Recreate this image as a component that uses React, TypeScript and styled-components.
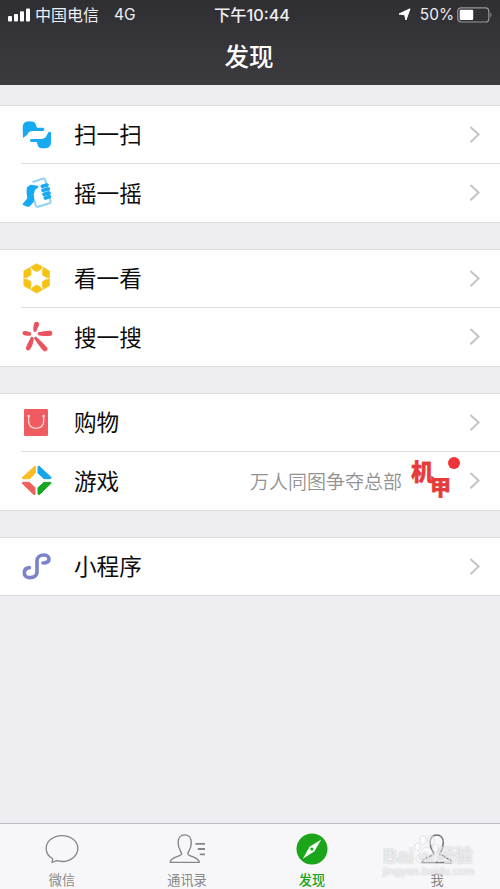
import React from 'react';
import styled, { createGlobalStyle } from 'styled-components';

const GlobalStyle = createGlobalStyle`
  * { box-sizing: border-box; }
  body {
    margin: 0;
    background: #eeedf2;
    font-family: Inter, "Noto Sans CJK SC", sans-serif;
  }
  svg { display: block; flex: none; }
`;

const Screen = styled.div`
  width: 500px;
  height: 889px;
  display: flex;
  flex-direction: column;
  background: #eeedf2;
  overflow: hidden;
`;

const Header = styled.header`
  height: 85px;
  flex: none;
  color: #fff;
  background: linear-gradient(#2f2e32, #3c3b40);
`;

const StatusBar = styled.div`
  height: 28px;
  display: grid;
  grid-template-columns: 1fr auto 1fr;
  align-items: center;
  padding: 0 7px 0 8px;
  font-size: 16px;
  line-height: 28px;
  white-space: nowrap;
  color: #efeff1;
`;

const StatusSide = styled.div<{ $end?: boolean }>`
  display: flex;
  align-items: center;
  justify-content: ${p => (p.$end ? 'flex-end' : 'flex-start')};
`;

const Carrier = styled.span`
  margin-left: 4px;
`;

const Network = styled.span`
  margin-left: 15px;
  padding-top: 1px;
  font-size: 15.5px;
`;

const Clock = styled.span`
  font-weight: 500;
  font-size: 16.3px;
  margin-left: 3px;
`;

const Percent = styled.span`
  margin: 0 3px 0 9px;
  padding-top: 1px;
  font-size: 15.4px;
`;

const Title = styled.h1`
  margin: 0;
  height: 56px;
  text-align: center;
  font-size: 24.5px;
  font-weight: 500;
  line-height: 58px;
  padding-right: 2px;
`;

const Main = styled.main`
  flex: 1;
  display: flex;
  flex-direction: column;
  gap: 26px;
  padding-top: 20px;
`;

const Group = styled.section`
  background: #fff;
  border-top: 1px solid #dcdbe0;
  border-bottom: 1px solid #dcdbe0;
`;

const Row = styled.div`
  display: flex;
  align-items: center;
  height: 57px;
  padding: 0 19px 0 21px;

  & + & {
    height: 59px;
    padding-left: 0;
    margin-left: 21px;
    border-top: 1px solid #dddcdf;
  }
`;

const Label = styled.span`
  margin-left: 21px;
  padding-top: 1px;
  font-size: 22.6px;
  line-height: 32px;
  color: #0c0c0c;
  flex: 1;
`;

const Note = styled.span`
  padding-top: 3px;
  font-size: 19px;
  font-weight: 350;
  line-height: 28px;
  color: #929292;
`;

const Promo = styled.div`
  position: relative;
  width: 42px;
  height: 44px;
  margin: 0 16px 0 9px;
`;

const PromoChar = styled.span<{ $x: number; $y: number; $size: number }>`
  position: absolute;
  left: ${p => p.$x}px;
  top: ${p => p.$y}px;
  font-size: ${p => p.$size}px;
  line-height: 22px;
  font-weight: 900;
  color: #e63b3b;
  -webkit-text-stroke: 0.4px #e63b3b;
`;

const Dot = styled.i`
  position: absolute;
  right: -7px;
  top: -2px;
  width: 12px;
  height: 12px;
  border-radius: 50%;
  background: #f03538;
`;

const TabBar = styled.nav`
  height: 66px;
  flex: none;
  display: grid;
  grid-template-columns: repeat(4, 125px);
  border-top: 1px solid #bdbcc2;
  background: #f7f7fa;
  position: relative;
`;

const Tab = styled.div<{ $active?: boolean }>`
  display: flex;
  flex-direction: column;
  align-items: center;
  padding-top: 8px;
  padding-right: 1px;
  font-size: 13.2px;
  line-height: 20px;
  font-weight: ${p => (p.$active ? 500 : 400)};
  color: ${p => (p.$active ? '#1aa51a' : '#878787')};

  span { margin-top: 4px; }
`;

const Watermark = styled.div`
  position: absolute;
  left: 383px;
  top: 19px;
  width: 94px;
  font-family: "Liberation Sans", "Noto Sans CJK SC", sans-serif;
  color: rgba(255, 255, 255, 0.7);
  text-shadow: 0 0 1.5px rgba(110, 110, 120, 0.5);
  white-space: nowrap;
`;

const WatermarkBrand = styled.div`
  display: flex;
  align-items: center;
  height: 26px;
  font-size: 20px;
  font-weight: 700;
  line-height: 26px;

  b { font-size: 18px; font-weight: 700; }
`;

const PawBadge = styled.div`
  display: grid;
  justify-items: center;
  margin: -13px -2px 0 0;

  svg, span { grid-area: 1 / 1; }
  span {
    align-self: end;
    font-size: 13px;
    line-height: 17px;
  }
`;

const WatermarkUrl = styled.div`
  font-size: 11px;
  line-height: 10px;
  height: 10px;
  letter-spacing: 0.15px;
  margin-top: -3px;
`;

const Signal = () => (
  <svg width="23" height="14" viewBox="0 0 23 14" fill="#fff">
    <rect x="0" y="8" width="4" height="5.5" rx="1" />
    <rect x="6" y="6" width="4" height="7.5" rx="1" />
    <rect x="12" y="3.3" width="4" height="10.2" rx="1" />
    <rect x="18" y="0.5" width="4" height="13" rx="1" />
  </svg>
);

const Location = () => (
  <svg width="13" height="13" viewBox="0 0 13 13" fill="#fff" stroke="#fff" strokeLinejoin="round">
    <path d="M12 .8 8 12 6.6 6.8 1 6Z" />
  </svg>
);

const Battery = () => (
  <svg width="36" height="16" viewBox="0 0 36 16">
    <rect x="0.8" y="0.8" width="31" height="14.2" rx="3.3" fill="none" stroke="#98979b" strokeWidth="1.2" />
    <rect x="2.7" y="2.8" width="13.5" height="10.2" rx="1" fill="#fff" />
    <path d="M33.4 5.4q2.2 2.5 0 5Z" fill="#98979b" />
  </svg>
);

const Chevron = () => (
  <svg width="12" height="18" viewBox="0 0 12 18" fill="none" stroke="#c5c5c8" strokeWidth="2">
    <path d="M1.4 1 9.6 8.6 1.4 16.2" />
  </svg>
);

const ScanIcon = () => (
  <svg width="32" height="32" viewBox="33 39 96 96" fill="#18aaf0">
    <path d="M39 96 38 64Q38 46 57 46L70 47Q76 48 78 57L81 65H99Q103 66 103 70T99 75H68Q62 75 56 79L52 86Z" />
    <path d="M120 77Q123 77 123 81V108Q123 127 104 127H95Q86 127 83 117L80 108H64Q60 108 60 104T64 99H94Q102 99 107 94L115 79Z" />
  </svg>
);

const ShakeIcon = () => (
  <svg width="32" height="32" viewBox="33 213 96 96">
    <path d="M68 228 99 218Q104 217 106 223L122 286Q123 290 118 292L84 302Q78 303 77 298L72 280" fill="#fff" stroke="#8fd2f5" strokeWidth="6" />
    <path d="M51 244 61 236Q75 236 86 241 84 249 75 251L71 267Q75 277 71 288L58 302Q46 304 37 295L52 277Q48 255 51 244Z" fill="#18aaf0" />
    <path d="M97 241 111 237M99 253 115 249M102 265 117 261M106 276 118 272" stroke="#18aaf0" strokeWidth="11" strokeLinecap="round" />
  </svg>
);

const LookIcon = () => (
  <svg width="32" height="32" viewBox="33 37 96 96" fill="#f5c316" stroke="#f5c316" strokeWidth="2" strokeLinejoin="round">
    {[0, 60, 120, 180, 240, 300].map(a => (
      <path key={a} d="M80 39 98 49 91 57 80 63 69 57 62 49Z" transform={`rotate(${a} 80 83)`} />
    ))}
  </svg>
);

const SearchIcon = () => (
  <svg width="32" height="32" viewBox="33 213 96 96" fill="#e9545f" stroke="#e9545f" strokeWidth="5" strokeLinejoin="round">
    <path d="M75 220Q80 216 85 221 86 225 76 243H73Q71 230 75 220Z" />
    <path d="M86 249Q110 243 122 245 127 250 122 255 105 257 86 253Z" />
    <path d="M77 262Q98 281 110 295 111 300 104 302 99 301 75 265Z" />
    <path d="M65 263 69 265Q67 285 58 297 54 301 50 296 50 290 65 263Z" />
    <path d="M41 246Q51 244 61 250V254Q48 256 41 252 38 249 41 246Z" />
  </svg>
);

const ShopIcon = () => (
  <svg width="32" height="32" viewBox="33 33 96 96">
    <rect x="42" y="39" width="72" height="81" rx="4" fill="#f05a61" />
    <path d="M56 60V76Q56 96 78 97 101 96 101 76V60" fill="none" stroke="#ffd6d3" strokeWidth="4" />
    <circle cx="56" cy="60" r="4" fill="#ffd6d3" />
    <circle cx="101" cy="60" r="4" fill="#ffd6d3" />
  </svg>
);

const GameIcon = () => (
  <svg width="32" height="32" viewBox="33 210 96 96" strokeWidth="3" strokeLinejoin="round">
    <path d="M74 214 76 215V234L59 251H38L37 248Z" fill="#fbbb21" stroke="#fbbb21" />
    <path d="M84 215 87 213 123 247 122 251H102L84 234Z" fill="#16a5e8" stroke="#16a5e8" />
    <path d="M37 262H58L75 278V298L72 299 37 265Z" fill="#f0605f" stroke="#f0605f" />
    <path d="M102 262H122L123 265 88 299 84 297V278Z" fill="#17a522" stroke="#17a522" />
  </svg>
);

const MiniIcon = () => (
  <svg width="32" height="32" viewBox="33 46 96 96" fill="none" stroke="#7b84cb" strokeWidth="11" strokeLinecap="round">
    <path d="M99 82C111 82 117 77 117 70 117 63 110 58 101 58 90 58 81 65 81 75V109C81 119 73 126 60 126 50 126 43 120 43 111 43 103 49 97 58 96" />
  </svg>
);

const ChatIcon = () => (
  <svg width="34" height="34" viewBox="0 0 34 34" fill="none" stroke="#868686" strokeWidth="1.3" strokeLinejoin="round">
    <path d="M17 3.6C8.2 3.6 1.2 9.2 1.2 16.4 1.2 20.8 3.8 24.5 7.7 26.8L7 30.5 11.7 28.7C13.4 29.2 15.2 29.5 17 29.5 25.8 29.5 32.8 23.6 32.8 16.4 32.8 9.2 25.8 3.6 17 3.6Z" />
  </svg>
);

const personPath =
  'M12.6 21.5C12.5 19.7 9.1 17.3 9.1 10.5 9.1 5.8 11.8 2.9 15.7 2.9S22.3 5.8 22.3 10.5C22.3 17.3 18.9 19.7 18.8 21.5 18.7 25 30.2 24.6 30.2 30.4H1.2C1.2 24.6 12.7 25 12.6 21.5Z';

const ContactsIcon = () => (
  <svg width="36" height="34" viewBox="0 0 36 34" fill="none" stroke="#868686" strokeWidth="1.4">
    <path d={personPath} />
    <path d="M26.4 11.9H36M28.8 17H36M30.8 22.4H36" strokeWidth="1.8" />
  </svg>
);

const CompassIcon = () => (
  <svg width="32" height="34" viewBox="0 0 32 34">
    <circle cx="16" cy="17" r="15.5" fill="#1aa51a" />
    <path d="M25.3 7.5 18.3 19.4 6.8 26.8 13.5 14.7Z" fill="#f4faf4" />
    <circle cx="15.9" cy="17" r="1.5" fill="#1aa51a" />
  </svg>
);

const MeIcon = () => (
  <svg width="32" height="34" viewBox="0 0 32 34" fill="none" stroke="#707070" strokeWidth="1.5">
    <path d={personPath} />
  </svg>
);

const Paw = () => (
  <svg width="25" height="31" viewBox="0 0 25 31" fill="#fff" fillOpacity="0.4" stroke="#d9d9dd" strokeWidth="0.7">
    <ellipse cx="3.5" cy="13" rx="3" ry="4" />
    <ellipse cx="9" cy="6" rx="3.2" ry="4.5" />
    <ellipse cx="17" cy="6" rx="3.2" ry="4.5" />
    <ellipse cx="21.5" cy="14" rx="3" ry="4" />
    <path d="M12.5 13C17 13 17 18 21.5 21 26 26 21 31 12.5 29 4 31-1 26 4 21 8 18 8 13 12.5 13Z" />
  </svg>
);

interface Item {
  label: string;
  icon: React.ReactNode;
  extra?: React.ReactNode;
}

const promo = (
  <>
    <Note>万人同图争夺总部</Note>
    <Promo>
      <PromoChar $x={0} $y={2} $size={23}>机</PromoChar>
      <PromoChar $x={19} $y={18} $size={21}>甲</PromoChar>
      <Dot />
    </Promo>
  </>
);

const groups: Item[][] = [
  [
    { label: '扫一扫', icon: <ScanIcon /> },
    { label: '摇一摇', icon: <ShakeIcon /> },
  ],
  [
    { label: '看一看', icon: <LookIcon /> },
    { label: '搜一搜', icon: <SearchIcon /> },
  ],
  [
    { label: '购物', icon: <ShopIcon /> },
    { label: '游戏', icon: <GameIcon />, extra: promo },
  ],
  [{ label: '小程序', icon: <MiniIcon /> }],
];

const tabs = [
  { label: '微信', icon: <ChatIcon /> },
  { label: '通讯录', icon: <ContactsIcon /> },
  { label: '发现', icon: <CompassIcon />, active: true },
  { label: '我', icon: <MeIcon /> },
];

export default function App() {
  return (
    <Screen>
      <GlobalStyle />
      <Header>
        <StatusBar>
          <StatusSide>
            <Signal />
            <Carrier>中国电信</Carrier>
            <Network>4G</Network>
          </StatusSide>
          <Clock>下午10:44</Clock>
          <StatusSide $end>
            <Location />
            <Percent>50%</Percent>
            <Battery />
          </StatusSide>
        </StatusBar>
        <Title>发现</Title>
      </Header>
      <Main>
        {groups.map(items => (
          <Group key={items[0].label}>
            {items.map(item => (
              <Row key={item.label}>
                {item.icon}
                <Label>{item.label}</Label>
                {item.extra}
                <Chevron />
              </Row>
            ))}
          </Group>
        ))}
      </Main>
      <TabBar>
        {tabs.map(tab => (
          <Tab key={tab.label} $active={tab.active}>
            {tab.icon}
            <span>{tab.label}</span>
          </Tab>
        ))}
        <Watermark>
          <WatermarkBrand>
            Bai
            <PawBadge>
              <Paw />
              <span>du</span>
            </PawBadge>
            <b>经验</b>
          </WatermarkBrand>
          <WatermarkUrl>jingyan.baidu.com</WatermarkUrl>
        </Watermark>
      </TabBar>
    </Screen>
  );
}
